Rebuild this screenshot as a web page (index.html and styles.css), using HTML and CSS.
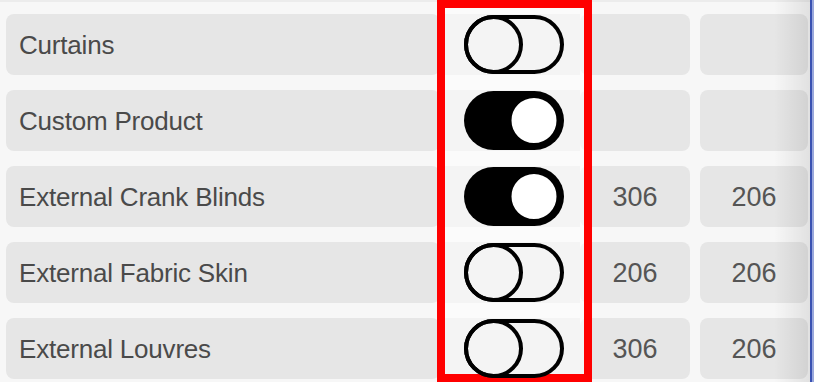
FILE: index.html
```html
<!DOCTYPE html>
<html>
<head>
<meta charset="utf-8">
<link rel="stylesheet" href="styles.css">
</head>
<body>
<div class="frame">
  <div class="top-band"></div>
  <div class="list">
    <div class="row">
      <div class="cell label">Curtains</div>
      <div class="cell toggle-cell">
        <svg class="toggle" viewBox="0 0 100 59" width="100" height="59"><rect x="2" y="2" width="96" height="55" rx="27.5" fill="none" stroke="#000" stroke-width="4"/><circle cx="29.5" cy="29.5" r="27.5" fill="none" stroke="#000" stroke-width="4"/></svg>
      </div>
      <div class="cell num"></div>
      <div class="cell num last"></div>
    </div>
    <div class="row">
      <div class="cell label">Custom Product</div>
      <div class="cell toggle-cell">
        <svg class="toggle" viewBox="0 0 100 59" width="100" height="59"><rect x="0" y="0" width="100" height="59" rx="29.5" fill="#000"/><circle cx="70" cy="29.5" r="24" fill="#fff" stroke="#000" stroke-width="3"/></svg>
      </div>
      <div class="cell num"></div>
      <div class="cell num last"></div>
    </div>
    <div class="row">
      <div class="cell label">External Crank Blinds</div>
      <div class="cell toggle-cell">
        <svg class="toggle" viewBox="0 0 100 59" width="100" height="59"><rect x="0" y="0" width="100" height="59" rx="29.5" fill="#000"/><circle cx="70" cy="29.5" r="24" fill="#fff" stroke="#000" stroke-width="3"/></svg>
      </div>
      <div class="cell num">306</div>
      <div class="cell num last">206</div>
    </div>
    <div class="row">
      <div class="cell label">External Fabric Skin</div>
      <div class="cell toggle-cell">
        <svg class="toggle" viewBox="0 0 100 59" width="100" height="59"><rect x="2" y="2" width="96" height="55" rx="27.5" fill="none" stroke="#000" stroke-width="4"/><circle cx="29.5" cy="29.5" r="27.5" fill="none" stroke="#000" stroke-width="4"/></svg>
      </div>
      <div class="cell num">206</div>
      <div class="cell num last">206</div>
    </div>
    <div class="row">
      <div class="cell label">External Louvres</div>
      <div class="cell toggle-cell">
        <svg class="toggle" viewBox="0 0 100 59" width="100" height="59"><rect x="2" y="2" width="96" height="55" rx="27.5" fill="none" stroke="#000" stroke-width="4"/><circle cx="29.5" cy="29.5" r="27.5" fill="none" stroke="#000" stroke-width="4"/></svg>
      </div>
      <div class="cell num">306</div>
      <div class="cell num last">206</div>
    </div>
  </div>
  <div class="highlight"></div>
  <div class="edge-shadow"></div>
  <div class="edge-line"></div>
</div>
</body>
</html>
```
FILE: styles.css
```css
html, body {
  margin: 0;
  padding: 0;
  background: #f7f7f7;
}
.frame {
  position: relative;
  width: 814px;
  height: 382px;
  overflow: hidden;
  background: #f7f7f7;
  font-family: "Liberation Sans", Arial, sans-serif;
  color: #4a4a4a;
}
.top-band {
  height: 2px;
  background: #ececec;
}
.list {
  display: flex;
  flex-direction: column;
  gap: 15px;
  padding: 12px 0 0 6px;
}
.row {
  display: flex;
  height: 61px;
}
.cell {
  background: #e6e6e6;
  border-radius: 8px;
  display: flex;
  align-items: center;
  box-sizing: border-box;
}
.label {
  width: 434px;
  padding-left: 13px;
  padding-top: 2px;
  font-size: 26px;
  letter-spacing: -0.2px;
}
.toggle-cell {
  width: 140px;
  border-radius: 0;
  padding-left: 7px;
  justify-content: center;
}
.toggle {
  position: relative;
  z-index: 2;
  display: block;
}
.num {
  width: 110px;
  justify-content: center;
  padding-top: 2px;
  font-size: 27px;
  color: #555;
}
.num.last {
  width: 108px;
  margin-left: 10px;
}
.highlight {
  position: absolute;
  left: 437px;
  top: 0;
  width: 155px;
  height: 382px;
  box-sizing: border-box;
  border: 8px solid #ff0000;
  background: rgba(255, 255, 255, 0.55);
  z-index: 1;
}
.edge-shadow {
  position: absolute;
  right: 4px;
  top: 0;
  width: 36px;
  height: 382px;
  background: linear-gradient(to right, rgba(0, 0, 0, 0), rgba(0, 0, 0, 0.09));
  z-index: 3;
}
.edge-line {
  position: absolute;
  right: 0;
  top: 0;
  width: 4px;
  height: 382px;
  background: linear-gradient(to right, #3a52b2 0, #3a52b2 2px, #9aa8dc 2px);
  z-index: 3;
}
```
